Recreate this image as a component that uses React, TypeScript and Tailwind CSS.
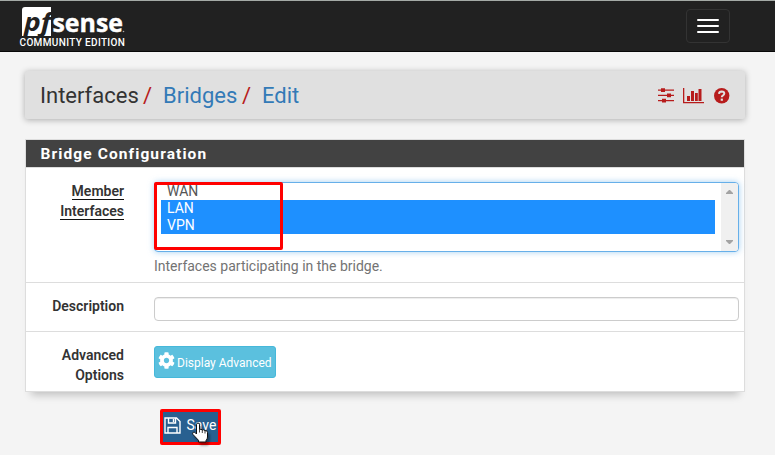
import type { ReactNode } from "react";
import { FaCog } from "react-icons/fa";

function Logo() {
  return (
    <div className="ml-5 w-[110px] pt-[6px]">
      <svg width="110" height="30" viewBox="0 0 110 30" className="block overflow-visible">
        <path d="M5 0H31V29H2V3Q2 0 5 0Z" fill="#fff" />
        <text transform="translate(4 23.500) scale(1.130 1)" fill="#212121" fontFamily="Open Sans, sans-serif" fontWeight="700" fontStyle="italic" fontSize="25">pf</text>
        <text x="32.500" y="25" fill="#fff" stroke="#fff" strokeWidth=".4" fontFamily="Open Sans, sans-serif" fontWeight="700" fontSize="24.500" textLength="70.500" lengthAdjust="spacingAndGlyphs">sense</text>
        <circle cx="103.500" cy="24.500" r=".8" fill="#aaa" />
      </svg>
      <div className="-ml-[0.5px] whitespace-nowrap text-[10px] leading-[11px] font-medium tracking-[0.35px] text-white">COMMUNITY EDITION</div>
    </div>
  );
}

function SlidersIcon() {
  return (
    <svg width="16" height="15" viewBox="0 0 16 15" fill="#b71c1c">
      <path d="M0 1.500h16v1.200H0zM0 6.800h16V8H0zM0 12h16v1.200H0z" />
      <path d="M3 .3h4v3.800H3zM9 5.500h4v3.800H9zM4 10.700h4v3.800H4z" />
    </svg>
  );
}

function ChartIcon() {
  return (
    <svg width="21" height="16" viewBox="0 0 21 16" fill="#b71c1c">
      <path d="M0 0h1.300v14H21v1.300H0zM4 8h3v5H4zM8 3h3v10H8zM12 5h2.800v8H12zM15.500 1h3v12h-3z" />
    </svg>
  );
}

function HelpIcon() {
  return (
    <svg width="16" height="16" viewBox="0 0 16 16" fill="none">
      <circle cx="7.700" cy="7.700" r="7.700" fill="#b71c1c" />
      <path d="M5 5.800Q5.200 3.500 7.700 3.500q2.600.1 2.600 2.100 0 1.200-1.500 2Q7.800 8.200 7.800 9.300" stroke="#e0e0e0" strokeWidth="2" />
      <path d="M6.700 10.600h2.200v2.200H6.700z" fill="#e0e0e0" />
    </svg>
  );
}

function SaveIcon() {
  return (
    <svg width="17" height="17" viewBox="0 0 17 17" fill="none" stroke="#fff" strokeWidth="1.400">
      <path d="M1 1h11.500L16 4.500V16H1zM4.500 1v5h7V1M4 16v-5.500h9V16" />
      <path d="M9.500 2v3" />
    </svg>
  );
}

function HandCursor() {
  return (
    <svg className="absolute left-[191px] top-[422px] drop-shadow-[2px_3px_1px_rgba(0,0,0,0.35)]" width="19" height="22" viewBox="0 0 19 22">
      <path d="M5.500 12V2.500Q5.500 1 7 1t1.500 1.500V7.500Q10 6.700 11.300 8 12.800 7.200 14 8.700q2.500-.7 2.500 1.800V15q0 2-1.500 3.500V20H7.500v-1.700L2 12.500Q1 11 2.300 10.300q1-.5 2 .5z" fill="#fff" stroke="#111" strokeWidth="1" />
      <path d="M8.500 7.500v3M11.300 8V11M14 9v2.500" stroke="#111" strokeWidth=".8" />
    </svg>
  );
}

function Row({ label, className, children }: { label: ReactNode; className: string; children: ReactNode }) {
  return (
    <div className={`flex ${className}`}>
      <div className="-mt-px w-[98px] shrink-0 text-right text-[14px] leading-5 font-semibold text-[#333]">{label}</div>
      <div className="ml-[30px] w-[585px]">{children}</div>
    </div>
  );
}

export default function App() {
  return (
    <div className="relative h-[455px] w-[775px] overflow-hidden bg-[#f4f4f4] font-['Roboto',sans-serif] text-[#333]">
      <nav className="flex h-[52px] justify-between border-t border-b border-t-[#a4aaa6] border-b-[#080808] bg-[#212121]">
        <Logo />
        <button className="mt-2 mr-[45px] flex h-[34px] w-[44px] flex-col items-center justify-center gap-1 rounded border border-[#333]">
          <span className="h-[2px] w-[22px] rounded-[1px] bg-white" />
          <span className="h-[2px] w-[22px] rounded-[1px] bg-white" />
          <span className="h-[2px] w-[22px] rounded-[1px] bg-white" />
        </button>
      </nav>

      <header className="mt-[19px] ml-[25px] flex h-12 w-[720px] items-center justify-between rounded-[2px] bg-[#e0e0e0] px-[15px] shadow-[0_1px_6px_rgba(0,0,0,0.3)]">
        <div className="mt-[2px] flex text-[22px] leading-6 whitespace-nowrap">
          <span className="w-[103px]">Interfaces</span>
          <span className="w-5 text-[#b71c1c]">/</span>
          <span className="w-[79px] text-[#337ab7]">Bridges</span>
          <span className="w-5 text-[#b71c1c]">/</span>
          <span className="text-[#337ab7]">Edit</span>
        </div>
        <div className="flex items-center pt-px">
          <SlidersIcon />
          <span className="ml-[9px]"><ChartIcon /></span>
          <span className="ml-[10px]"><HelpIcon /></span>
        </div>
      </header>

      <main className="mt-5 ml-[25px] h-[253px] w-[720px] border border-[#ddd] bg-white shadow-[0_9px_8px_-6px_rgba(0,0,0,0.22)]">
        <h2 className="h-[27px] bg-[#424242] pl-[14.500px] text-[15.500px] leading-[28px] font-bold tracking-[1.100px] text-white">Bridge Configuration</h2>
        <Row className="h-[116px] border-t border-b border-[#ddd] pt-[14px]" label={<div><span className="border-b-[1.500px] border-[#111]">Member</span><br /><span className="border-b-[1.500px] border-[#111]">Interfaces</span></div>}>
          <div className="flex h-[70px] justify-between overflow-hidden rounded border border-[#66afe9] bg-white shadow-[0_0_6px_rgba(102,175,233,0.6)]">
            <div className="ml-[6px] w-[554px] text-[14px] leading-[17px] text-[#555]">
              <div className="h-[17px] pl-[6px]">WAN</div>
              <div className="h-[17px] bg-[#1e90ff] pl-[6px] text-white">LAN</div>
              <div className="h-[17px] bg-[#1e90ff] pl-[6px] text-white">VPN</div>
            </div>
            <div className="flex w-[17px] flex-col items-center justify-between bg-[#f0f0f0] py-[7px]">
              <svg width="7" height="4" fill="#a3a3a3"><path d="M3 0h1l3 3v1H0V3z" /></svg>
              <svg width="7" height="4" fill="#a3a3a3"><path d="M0 0h7v1L4 4H3L0 1z" /></svg>
            </div>
          </div>
          <p className="mt-1 text-[14px] leading-5 text-[#737373]">Interfaces participating in the bridge.</p>
        </Row>
        <Row className="h-[49px] border-b border-[#ddd] pt-[14px]" label="Description">
          <input className="block h-6 w-full rounded border border-[#ccc] bg-white shadow-[inset_0_1px_1px_rgba(0,0,0,0.075)]" />
        </Row>
        <Row className="pt-[14px]" label={<>Advanced<br />Options</>}>
          <button className="flex h-8 w-[122px] items-center rounded-[3px] border border-[#46b8da] bg-[#5bc0de] pl-[3px] text-[12px] text-white">
            <FaCog size={17} className="mb-1 -ml-[0.5px]" />
            <span className="mt-[2px] ml-[2.500px] whitespace-nowrap">Display Advanced</span>
          </button>
        </Row>
      </main>
      <button className="mt-[17px] ml-40 flex h-9 w-[61px] items-center rounded-[2px] border-[3px] border-[#ff0000] bg-[#286090] text-[14px] text-white">
        <span className="-mt-[3px] ml-[0.5px]"><SaveIcon /></span><span className="-mt-[3px] ml-[6px]">Save</span>
      </button>
      <div className="absolute left-[154px] top-[182px] h-[68px] w-[129px] rounded-[2px] border-[3px] border-[#ff0000]" />
      <HandCursor />
    </div>
  );
}
